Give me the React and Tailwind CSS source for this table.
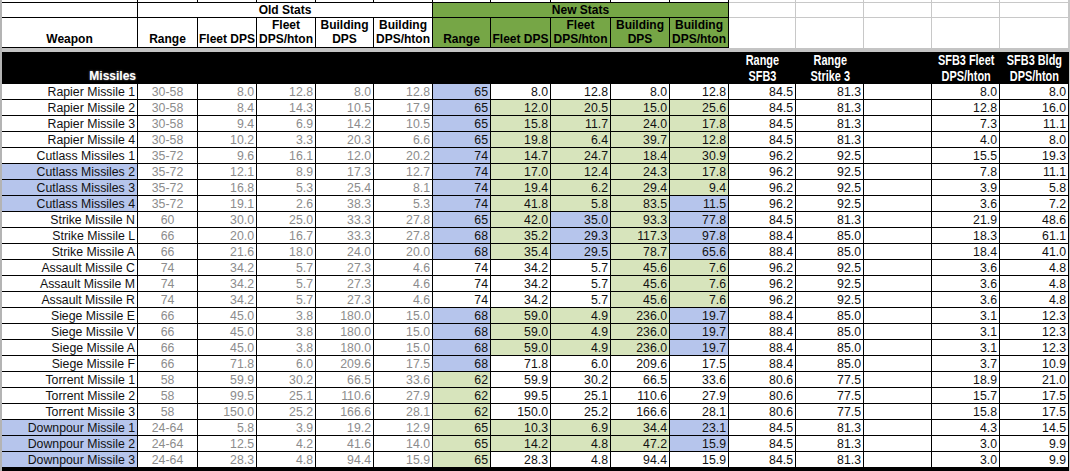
import React from 'react'

const COLS = 'grid grid-cols-[136px_60px_59px_59px_58px_59px_58px_60px_60px_59px_59px_67px_68px_68px_68px_69px]'

const FILL = {
  b: 'bg-[#b6c5ec]',
  g: 'bg-[#d7e4bc]',
  w: 'bg-white',
}

// name, nameBlue, old range, old x4, new range, new x4, sfb3 range, strike3 range, sfb3 fleet, sfb3 bldg, fills
const rows = [
  ['Rapier Missile 1', false, '30-58', '8.0', '12.8', '8.0', '12.8', '65', '8.0', '12.8', '8.0', '12.8', '84.5', '81.3', '8.0', '8.0', 'bwwww'],
  ['Rapier Missile 2', false, '30-58', '8.4', '14.3', '10.5', '17.9', '65', '12.0', '20.5', '15.0', '25.6', '84.5', '81.3', '12.8', '16.0', 'bgggg'],
  ['Rapier Missile 3', false, '30-58', '9.4', '6.9', '14.2', '10.5', '65', '15.8', '11.7', '24.0', '17.8', '84.5', '81.3', '7.3', '11.1', 'bgggg'],
  ['Rapier Missile 4', false, '30-58', '10.2', '3.3', '20.3', '6.6', '65', '19.8', '6.4', '39.7', '12.8', '84.5', '81.3', '4.0', '8.0', 'bgggg'],
  ['Cutlass Missiles 1', false, '35-72', '9.6', '16.1', '12.0', '20.2', '74', '14.7', '24.7', '18.4', '30.9', '96.2', '92.5', '15.5', '19.3', 'bgggg'],
  ['Cutlass Missiles 2', true, '35-72', '12.1', '8.9', '17.3', '12.7', '74', '17.0', '12.4', '24.3', '17.8', '96.2', '92.5', '7.8', '11.1', 'bgggg'],
  ['Cutlass Missiles 3', true, '35-72', '16.8', '5.3', '25.4', '8.1', '74', '19.4', '6.2', '29.4', '9.4', '96.2', '92.5', '3.9', '5.8', 'bgggg'],
  ['Cutlass Missiles 4', true, '35-72', '19.1', '2.6', '38.3', '5.3', '74', '41.8', '5.8', '83.5', '11.5', '96.2', '92.5', '3.6', '7.2', 'bgggb'],
  ['Strike Missile N', false, '60', '30.0', '25.0', '33.3', '27.8', '65', '42.0', '35.0', '93.3', '77.8', '84.5', '81.3', '21.9', '48.6', 'bgbgb'],
  ['Strike Missile L', false, '66', '20.0', '16.7', '33.3', '27.8', '68', '35.2', '29.3', '117.3', '97.8', '88.4', '85.0', '18.3', '61.1', 'bgbgb'],
  ['Strike Missile A', false, '66', '21.6', '18.0', '24.0', '20.0', '68', '35.4', '29.5', '78.7', '65.6', '88.4', '85.0', '18.4', '41.0', 'bgbgb'],
  ['Assault Missile C', false, '74', '34.2', '5.7', '27.3', '4.6', '74', '34.2', '5.7', '45.6', '7.6', '96.2', '92.5', '3.6', '4.8', 'wwwgg'],
  ['Assault Missile M', false, '74', '34.2', '5.7', '27.3', '4.6', '74', '34.2', '5.7', '45.6', '7.6', '96.2', '92.5', '3.6', '4.8', 'wwwgg'],
  ['Assault Missile R', false, '74', '34.2', '5.7', '27.3', '4.6', '74', '34.2', '5.7', '45.6', '7.6', '96.2', '92.5', '3.6', '4.8', 'wwwgg'],
  ['Siege Missile E', false, '66', '45.0', '3.8', '180.0', '15.0', '68', '59.0', '4.9', '236.0', '19.7', '88.4', '85.0', '3.1', '12.3', 'bgggb'],
  ['Siege Missile V', false, '66', '45.0', '3.8', '180.0', '15.0', '68', '59.0', '4.9', '236.0', '19.7', '88.4', '85.0', '3.1', '12.3', 'bgggb'],
  ['Siege Missile A', false, '66', '45.0', '3.8', '180.0', '15.0', '68', '59.0', '4.9', '236.0', '19.7', '88.4', '85.0', '3.1', '12.3', 'bgggb'],
  ['Siege Missile F', false, '66', '71.8', '6.0', '209.6', '17.5', '68', '71.8', '6.0', '209.6', '17.5', '88.4', '85.0', '3.7', '10.9', 'bwwww'],
  ['Torrent Missile 1', false, '58', '59.9', '30.2', '66.5', '33.6', '62', '59.9', '30.2', '66.5', '33.6', '80.6', '77.5', '18.9', '21.0', 'gwwww'],
  ['Torrent Missile 2', false, '58', '99.5', '25.1', '110.6', '27.9', '62', '99.5', '25.1', '110.6', '27.9', '80.6', '77.5', '15.7', '17.5', 'gwwww'],
  ['Torrent Missile 3', false, '58', '150.0', '25.2', '166.6', '28.1', '62', '150.0', '25.2', '166.6', '28.1', '80.6', '77.5', '15.8', '17.5', 'gwwww'],
  ['Downpour Missile 1', true, '24-64', '5.8', '3.9', '19.2', '12.9', '65', '10.3', '6.9', '34.4', '23.1', '84.5', '81.3', '4.3', '14.5', 'ggggb'],
  ['Downpour Missile 2', true, '24-64', '12.5', '4.2', '41.6', '14.0', '65', '14.2', '4.8', '47.2', '15.9', '84.5', '81.3', '3.0', '9.9', 'ggggb'],
  ['Downpour Missile 3', true, '24-64', '28.3', '4.8', '94.4', '15.9', '65', '28.3', '4.8', '94.4', '15.9', '84.5', '81.3', '3.0', '9.9', 'gwwww'],
]

const cell = 'border-r border-b border-black flex items-end overflow-hidden whitespace-nowrap'
const num = `${cell} justify-end pr-[2px] leading-[14px]`

function HeadCell({ children, green }) {
  return (
    <div className={`border-r border-b border-black flex items-end justify-center text-center font-bold leading-[14px] pb-[1px] ${green ? 'bg-[#76a646]' : 'bg-white'}`}>
      <span>{children}</span>
    </div>
  )
}

function GridCell() {
  return <div className="border-r border-b border-[#c8c8c8] bg-white" />
}

// condensed bold labels in the black band
function BandLabel({ children }) {
  return (
    <div className="flex items-end justify-center text-center text-[14px] leading-[16px]">
      <span className="inline-block whitespace-nowrap scale-x-[0.78]">{children}</span>
    </div>
  )
}

function DataRow({ r }) {
  const fills = r[16]
  return (
    <div className={`${COLS} h-[16px] text-[12.3px]`}>
      <div className={`${num} text-[#111] ${r[1] ? FILL.b : 'bg-white'}`}>{r[0]}</div>
      <div className={`${cell} justify-center leading-[14px] text-[#8c8c8c]`}>{r[2]}</div>
      {r.slice(3, 7).map((v, i) => (
        <div key={'o' + i} className={`${num} text-[#8c8c8c]`}>{v}</div>
      ))}
      {r.slice(7, 12).map((v, i) => (
        <div key={'n' + i} className={`${num} text-[#111] ${FILL[fills[i]]}`}>{v}</div>
      ))}
      <div className={`${num} text-[#111]`}>{r[12]}</div>
      <div className={`${num} text-[#111]`}>{r[13]}</div>
      <div className={`${num}`} />
      <div className={`${num} text-[#111]`}>{r[14]}</div>
      <div className={`${num} text-[#111]`}>{r[15]}</div>
    </div>
  )
}

export default function App() {
  return (
    <div className="w-[1070px] h-[471px] overflow-hidden bg-white flex font-['Liberation_Sans',Arial,sans-serif] text-black">
      <div className="w-[2px] shrink-0 bg-[#b4b4b4]" />
      <div className="w-[1067px] shrink-0 flex flex-col">
        {/* scrolled-off row */}
        <div className={`${COLS} h-[3px]`}>
          {Array.from({ length: 11 }).map((_, i) => (
            <div key={i} className="border-r border-b border-black" />
          ))}
          {Array.from({ length: 5 }).map((_, i) => (
            <div key={i} className="border-r border-b border-[#c8c8c8]" />
          ))}
        </div>

        {/* group titles */}
        <div className={`${COLS} h-[15px] text-[12px]`}>
          <div className="border-r border-b border-black" />
          <div className="col-span-5 border-r border-b border-black flex items-end justify-center font-bold leading-[14px]">
            Old Stats
          </div>
          <div className="col-span-5 border-r border-b border-black bg-[#76a646] flex items-end justify-center font-bold leading-[14px]">
            New Stats
          </div>
          <GridCell />
          <GridCell />
          <GridCell />
          <GridCell />
          <GridCell />
        </div>

        {/* column titles */}
        <div className={`${COLS} h-[30px] text-[12px]`}>
          <HeadCell>Weapon</HeadCell>
          <HeadCell>Range</HeadCell>
          <HeadCell>Fleet DPS</HeadCell>
          <HeadCell>Fleet<br />DPS/hton</HeadCell>
          <HeadCell>Building<br />DPS</HeadCell>
          <HeadCell>Building<br />DPS/hton</HeadCell>
          <HeadCell green>Range</HeadCell>
          <HeadCell green>Fleet DPS</HeadCell>
          <HeadCell green>Fleet<br />DPS/hton</HeadCell>
          <HeadCell green>Building<br />DPS</HeadCell>
          <HeadCell green>Building<br />DPS/hton</HeadCell>
          <div className="border-r border-[#c8c8c8]" />
          <div className="border-r border-[#c8c8c8]" />
          <div className="border-r border-[#c8c8c8]" />
          <div className="border-r border-[#c8c8c8]" />
          <div className="border-r border-[#c8c8c8]" />
        </div>

        <div className="h-[4px] bg-[#c4c4c4]" />

        {/* section band */}
        <div className={`${COLS} h-[32px] bg-black text-white text-[12px] font-bold leading-[14px]`}>
          <div className="flex items-end justify-end pr-[2px] pb-[1px] [text-shadow:0_0_2px_#888]">Missiles</div>
          <div className="col-span-10" />
          <BandLabel>Range<br />SFB3</BandLabel>
          <BandLabel>Range<br />Strike 3</BandLabel>
          <div />
          <BandLabel>SFB3 Fleet<br />DPS/hton</BandLabel>
          <BandLabel>SFB3 Bldg<br />DPS/hton</BandLabel>
        </div>

        {rows.map((r) => (
          <DataRow key={r[0]} r={r} />
        ))}

        <div className="flex-1 bg-black" />
      </div>
      <div className="flex-1 bg-[#c8c8c8]" />
    </div>
  )
}
